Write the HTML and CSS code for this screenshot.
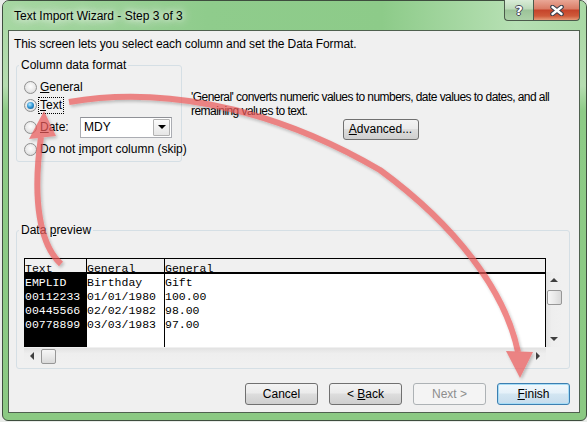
FILE: index.html
```html
<!DOCTYPE html>
<html lang="en">
<head>
    <meta charset="UTF-8">
    <meta name="viewport" content="width=device-width, initial-scale=1.0">
    <title>Text Import Wizard - Step 3 of 3</title>
    <link rel="stylesheet" href="styles.css">
</head>
<body>
  <div class="screen">
    <section class="window">
      <header class="titlebar">
        <h1 class="title">Text Import Wizard - Step 3 of 3</h1>
        <div class="caption-buttons">
          <button class="cap-btn cap-help" type="button" aria-label="Help"><span class="cap-help-glyph">?</span></button>
          <button class="cap-btn cap-close" type="button" aria-label="Close">
            <svg width="14" height="11" viewBox="0 0 14 11">
              <path d="M2.5 2 L11.5 9 M11.5 2 L2.5 9" stroke="#3a3f4c" stroke-width="4.6" stroke-linecap="round" fill="none"/>
              <path d="M2.5 2 L11.5 9 M11.5 2 L2.5 9" stroke="#ffffff" stroke-width="2.4" stroke-linecap="round" fill="none"/>
            </svg>
          </button>
        </div>
      </header>

      <div class="client">
        <p class="intro">This screen lets you select each column and set the Data Format.</p>

        <div class="format-row">
          <fieldset class="group format-group">
            <legend>Column data format</legend>
            <label class="radio-row">
              <span class="radio"></span>
              <span class="radio-label"><u>G</u>eneral</span>
            </label>
            <label class="radio-row">
              <span class="radio radio-checked"></span>
              <span class="radio-label radio-label-focus"><u>T</u>ext</span>
            </label>
            <label class="radio-row radio-row-date">
              <span class="radio"></span>
              <span class="radio-label date-label"><u>D</u>ate:</span>
              <span class="combo">
                <span class="combo-value">MDY</span>
                <span class="combo-button"><span class="combo-arrow"></span></span>
              </span>
            </label>
            <label class="radio-row radio-row-skip">
              <span class="radio"></span>
              <span class="radio-label">Do not <u>i</u>mport column (skip)</span>
            </label>
          </fieldset>

          <div class="format-help">
            <p>'General' converts numeric values to numbers, date values to dates, and all<br>remaining values to text.</p>
            <button class="btn btn-advanced" type="button"><u>A</u>dvanced...</button>
          </div>
        </div>

        <fieldset class="group preview-group">
          <legend>Data <u>p</u>review</legend>
          <div class="preview">
            <div class="grid-main">
              <div class="grid-head">
                <div class="hcell c1">Text</div>
                <div class="hcell c2">General</div>
                <div class="hcell c3">General</div>
              </div>
              <div class="grid-body">
                <div class="gcol c1 selected">
                  <div>EMPLID</div>
                  <div>00112233</div>
                  <div>00445566</div>
                  <div>00778899</div>
                </div>
                <div class="gcol c2">
                  <div>Birthday</div>
                  <div>01/01/1980</div>
                  <div>02/02/1982</div>
                  <div>03/03/1983</div>
                </div>
                <div class="gcol c3">
                  <div>Gift</div>
                  <div>100.00</div>
                  <div>98.00</div>
                  <div>97.00</div>
                </div>
              </div>
              <div class="hscroll">
                <span class="sb-btn"><span class="tri tri-left"></span></span>
                <span class="sb-thumb"></span>
                <span class="sb-track"></span>
                <span class="sb-btn"><span class="tri tri-right"></span></span>
              </div>
            </div>
            <div class="vscroll">
              <span class="sb-btn"><span class="tri tri-up"></span></span>
              <span class="sb-thumb sb-thumb-v"></span>
              <span class="sb-track"></span>
              <span class="sb-btn"><span class="tri tri-down"></span></span>
            </div>
          </div>
        </fieldset>

        <div class="actions">
          <button class="btn" type="button">Cancel</button>
          <button class="btn" type="button">&lt; <u>B</u>ack</button>
          <button class="btn btn-disabled" type="button" disabled>Next &gt;</button>
          <button class="btn btn-default" type="button"><u>F</u>inish</button>
        </div>
      </div>
    </section>

    <svg class="arrows" width="587" height="422" viewBox="0 0 587 422" aria-hidden="true">
      <defs>
        <filter id="arrow-shadow" x="-20%" y="-20%" width="140%" height="140%">
          <feDropShadow dx="1.5" dy="2" stdDeviation="1.5" flood-color="#000000" flood-opacity="0.3"/>
        </filter>
      </defs>
      <g opacity="0.72" filter="url(#arrow-shadow)">
        <path d="M61 264 C40 245 32 200 41 137" fill="none" stroke="#ea5a5a" stroke-width="6"/>
        <polygon points="29,139 56,136 44,111" fill="#ea5a5a"/>
        <path d="M69 102 C150 88 260 100 380 170 C455 225 505 290 518 352" fill="none" stroke="#ea5a5a" stroke-width="6"/>
        <polygon points="506,351 533,352 520,378" fill="#ea5a5a"/>
      </g>
    </svg>
  </div>
</body>
</html>
```

FILE: styles.css
```css
html,
body {
  margin: 0;
  padding: 0;
}

body {
  width: 587px;
  height: 422px;
  overflow: hidden;
  font-family: "Liberation Sans", Arial, sans-serif;
  font-size: 12px;
  line-height: 15px;
  color: #000000;
  background-color: #e9ece9;
}

.screen {
  position: relative;
  width: 587px;
  height: 422px;
}

.window {
  display: flex;
  flex-direction: column;
  box-sizing: border-box;
  width: 585px;
  height: 421px;
  margin-left: 2px;
  padding: 0 6px 7px 5px;

  background: linear-gradient(to bottom, #a8d8a2 0, #b6ddb1 85px, #8dcb86 110px, #8bc983 100%);
  border: 1px solid #3e4d3e;
  border-radius: 7px 7px 6px 6px;
}

.titlebar {
  display: flex;
  align-items: flex-start;
  flex-shrink: 0;
  height: 29px;
  margin: 0 -6px 0 -5px;
  padding: 0 6px 0 5px;

  background: linear-gradient(90deg, #a6d7a2 0, #8fcc8c 35%, #8dcb89 65%, #b7e0b4 88%, #a9d9a5 100%);
  border-radius: 6px 6px 0 0;
}

.title {
  flex-grow: 1;
  margin: 0;
  padding: 8px 0 0 6px;

  font-size: 12px;
  font-weight: 400;
  line-height: 15px;
  text-shadow: 0 0 6px #ffffff, 0 0 12px rgba(255, 255, 255, 0.9), 0 0 18px rgba(255, 255, 255, 0.6);
}

.caption-buttons {
  display: flex;
  margin-top: -1px;
}

.cap-btn {
  display: flex;
  align-items: center;
  justify-content: center;
  box-sizing: border-box;
  height: 21px;
  padding: 0;

  border: 1px solid #4b5a4b;
  border-top: none;
}

.cap-help {
  width: 29px;
  border-right: none;
  border-radius: 0 0 0 4px;
  background: linear-gradient(to bottom, #d9ecd7 0, #bcd9b9 45%, #9cc399 50%, #acd1a8 100%);
}

.cap-help-glyph {
  font-family: "DejaVu Sans", sans-serif;
  font-size: 13px;
  font-weight: 700;
  line-height: 13px;
  color: #ffffff;
  text-shadow: 1px 0 #3f4654, -1px 0 #3f4654, 0 1px #3f4654, 0 -1px #3f4654;
}

.cap-close {
  width: 47px;
  border-radius: 0 0 4px 0;
  background: linear-gradient(to bottom, #e9a796 0, #d97b65 45%, #c5432a 50%, #cf5a3a 80%, #e59a78 100%);
}

.client {
  flex-grow: 1;
  background-color: #f0f0f0;
  border: 1px solid #4f604f;
}

.intro {
  margin: 0;
  padding: 6px 0 0 5px;
  letter-spacing: -0.1px;
}

.format-row {
  display: flex;
  align-items: flex-start;
  margin-top: 6px;
  padding-left: 7px;
}

.group {
  min-width: 0;
  margin: 0;
  padding: 0;
  border: 1px solid #d5dfe5;
  border-radius: 3px;
}

.group legend {
  margin-left: 2px;
  padding: 0 2px;
  line-height: 15px;
}

.format-group {
  box-sizing: border-box;
  flex-shrink: 0;
  width: 166px;
  padding: 5px 0 3px;
}

.radio-row {
  display: flex;
  align-items: center;
  height: 18px;
  padding-left: 7px;
}

.radio-row-date {
  height: 22px;
  margin-top: 2px;
}

.radio-row-skip {
  margin-top: 2px;
}

.radio {
  display: flex;
  align-items: center;
  justify-content: center;
  flex-shrink: 0;
  box-sizing: border-box;
  width: 13px;
  height: 13px;

  background: radial-gradient(circle at 50% 40%, #fdfdfd 0, #e9e9e9 55%, #cdcdcd 100%);
  border: 1px solid #8f8f8f;
  border-radius: 50%;
}

.radio-checked::after {
  content: "";
  width: 7px;
  height: 7px;
  background: radial-gradient(circle at 40% 35%, #b4e8ff 0, #2c93d2 50%, #0e4c7c 100%);
  border-radius: 50%;
}

.radio-label {
  margin-left: 1px;
  padding: 1px 2px;
  white-space: nowrap;
}

.radio-label-focus {
  outline: 1px dotted #000000;
  outline-offset: -1px;
}

.date-label {
  box-sizing: border-box;
  width: 42px;
}

.combo {
  display: flex;
  box-sizing: border-box;
  width: 92px;
  height: 21px;

  background-color: #ffffff;
  border: 1px solid #abadb3;
  border-top-color: #8f9197;
}

.combo-value {
  flex-grow: 1;
  padding-left: 3px;
  line-height: 19px;
}

.combo-button {
  display: flex;
  align-items: center;
  justify-content: center;
  box-sizing: border-box;
  width: 17px;
  margin: 1px;

  background: linear-gradient(to bottom, #fbfbfb, #e6e6e6);
  border: 1px solid #b2b2b2;
  border-radius: 1px;
}

.combo-arrow {
  width: 0;
  height: 0;
  border-top: 4px solid #000000;
  border-left: 4px solid transparent;
  border-right: 4px solid transparent;
}

.format-help {
  display: flex;
  flex-direction: column;
  align-items: center;
  width: 379px;
  margin: 32px 0 0 9px;
}

.format-help p {
  align-self: stretch;
  margin: 0;
  line-height: 14px;
  letter-spacing: -0.55px;
  white-space: nowrap;
}

.btn {
  box-sizing: border-box;
  width: 73px;
  height: 22px;
  padding: 0;

  font: inherit;
  color: #000000;

  background: linear-gradient(to bottom, #f3f3f3 0, #ebebeb 45%, #dddddd 50%, #cfcfcf 100%);
  border: 1px solid #707070;
  border-radius: 3px;
}

.btn-advanced {
  width: 76px;
  height: 21px;
  margin-top: 1px;
}

.btn-disabled {
  color: #8d8d8d;
  background: #f4f4f4;
  border-color: #adb2b5;
}

.btn-default {
  background: linear-gradient(to bottom, #f1f8fc 0, #e5f1f9 45%, #d3e6f2 50%, #c6dced 100%);
  border-color: #3c7fb1;
  box-shadow: inset 0 0 0 1px #a6dcf6;
}

.preview-group {
  box-sizing: border-box;
  width: 554px;
  margin: 61px 0 0 7px;
  padding: 20px 0 4px;
}

.preview {
  display: flex;
  margin-left: 7px;
  font-family: "Liberation Mono", "Courier New", monospace;
  font-size: 11.5px;
}

.grid-main {
  width: 522px;
}

.grid-head {
  display: flex;
  height: 13px;
  line-height: 19px;

  background-color: #f0f0f0;
  border-top: 1px solid #000000;
  border-bottom: 2px solid #000000;
  border-right: 1px solid #000000;
}

.hcell {
  box-sizing: border-box;
  white-space: nowrap;
  border-left: 1px solid #000000;
}

.c1 {
  flex-shrink: 0;
  width: 62px;
}

.c2 {
  flex-shrink: 0;
  width: 78px;
}

.c3 {
  flex-grow: 1;
}

.grid-body {
  display: flex;
  height: 73px;
  line-height: 14px;

  background-color: #ffffff;
  border-right: 1px solid #000000;
}

.gcol {
  box-sizing: border-box;
  padding-top: 2px;
  overflow: hidden;
  white-space: nowrap;
}

.gcol.c1 {
  padding-left: 1px;
}

.gcol.c2,
.gcol.c3 {
  border-left: 1px solid #000000;
}

.selected {
  color: #ffffff;
  background-color: #000000;
}

.hscroll {
  display: flex;
  align-items: center;
  height: 16px;
  margin-top: 1px;
  background: linear-gradient(to bottom, #e2e2e2 0, #eeeeee 35%, #f0f0f0 100%);
}

.vscroll {
  display: flex;
  flex-direction: column;
  align-items: center;
  width: 16px;
  height: 75px;
  margin-top: 14px;
  background: linear-gradient(90deg, #e2e2e2 0, #eeeeee 35%, #f0f0f0 100%);
}

.sb-btn {
  display: flex;
  align-items: center;
  justify-content: center;
  flex-shrink: 0;
  width: 16px;
  height: 16px;
}

.sb-track {
  flex-grow: 1;
}

.sb-thumb {
  flex-shrink: 0;
  box-sizing: border-box;
  width: 15px;
  height: 15px;
  margin-left: 1px;

  background: linear-gradient(to bottom, #f6f6f6 0, #e9e9e9 50%, #d9d9d9 100%);
  border: 1px solid #979797;
  border-radius: 2px;
}

.sb-thumb-v {
  margin: 2px 0 0;
  background: linear-gradient(90deg, #f6f6f6 0, #e9e9e9 50%, #d9d9d9 100%);
}

.tri {
  width: 0;
  height: 0;
}

.tri-left {
  border-right: 4px solid #404040;
  border-top: 4px solid transparent;
  border-bottom: 4px solid transparent;
}

.tri-right {
  border-left: 4px solid #404040;
  border-top: 4px solid transparent;
  border-bottom: 4px solid transparent;
}

.tri-up {
  border-bottom: 4px solid #404040;
  border-left: 4px solid transparent;
  border-right: 4px solid transparent;
}

.tri-down {
  border-top: 4px solid #404040;
  border-left: 4px solid transparent;
  border-right: 4px solid transparent;
}

.actions {
  display: flex;
  justify-content: flex-end;
  gap: 11px;
  margin-top: 14px;
  padding-right: 9px;
}

.arrows {
  position: absolute;
  top: 0;
  left: 0;
  pointer-events: none;
}
```
